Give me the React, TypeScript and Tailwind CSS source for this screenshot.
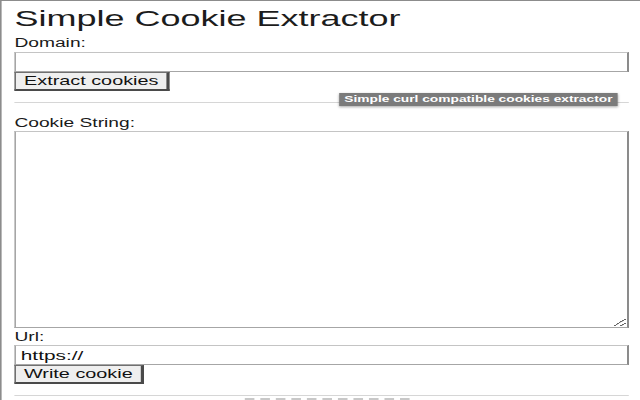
import React from "react";

export default function App() {
  return (
    <div className="w-[640px] h-[400px] overflow-hidden bg-white">
      <div
        className="relative w-[400px] h-[400px] origin-top-left scale-x-[1.6] border-t border-l border-[#8c8c8c] bg-white pl-[8px] pr-[7.5px] text-[#1a1a1a]"
        style={{ fontFamily: '"Liberation Sans", Arial, sans-serif' }}
      >
        <h1 className="mt-[5px] text-[22.5px] leading-[26px] font-normal text-[#1c1c1c]">
          Simple Cookie Extractor
        </h1>

        <div className="mt-[4px] text-[12px] leading-[14px]">Domain:</div>
        <input
          type="text"
          readOnly
          className="mt-[2px] block w-full h-[20px] border border-[#a6a6a6] border-t-[#c4c4c4] border-r-[#6f6f6f] bg-white px-[3px] text-[13px] outline-none"
        />
        <button className="block h-[19px] px-[5px] bg-[#efefef] border border-[#707070] border-b-2 border-r-2 border-b-[#4a4a4a] border-r-[#4a4a4a] text-[12.4px] leading-none text-[#111]">
          Extract cookies
        </button>

        <div className="mt-[11px] h-px bg-[#d6d6d6]" />

        <div className="mt-[13px] text-[12px] leading-[14px]">Cookie String:</div>
        <textarea
          readOnly
          className="mt-[1px] block w-full h-[197px] border border-[#a6a6a6] border-t-[#c4c4c4] border-r-[#6f6f6f] bg-white outline-none"
        />

        <div className="mt-[2px] text-[12px] leading-[14px]">Url:</div>
        <input
          type="text"
          readOnly
          value="https://"
          className="mt-[1px] block w-full h-[20px] border border-[#a6a6a6] border-t-[#c4c4c4] border-r-[#6f6f6f] bg-white px-[3px] text-[13px] leading-none text-[#111] outline-none"
        />
        <button className="block h-[19px] px-[5px] bg-[#efefef] border border-[#707070] border-b-2 border-r-2 border-b-[#4a4a4a] border-r-[#4a4a4a] text-[12.4px] leading-none text-[#111]">
          Write cookie
        </button>

        <div className="mt-[11px] h-px bg-[#d6d6d6]" />
        <div className="mt-[2px] ml-[144px] w-[103px] border-t-2 border-dashed border-[#c8c8c8]" />

        <div className="absolute left-[211px] top-[92px] w-[174px] h-[13px] bg-[#7b7b7b] shadow-[0_1px_2px_rgba(0,0,0,0.35)] flex items-center justify-center">
          <span className="text-[8.6px] leading-none font-bold text-white whitespace-nowrap">
            Simple curl compatible cookies extractor
          </span>
        </div>
      </div>
    </div>
  );
}
